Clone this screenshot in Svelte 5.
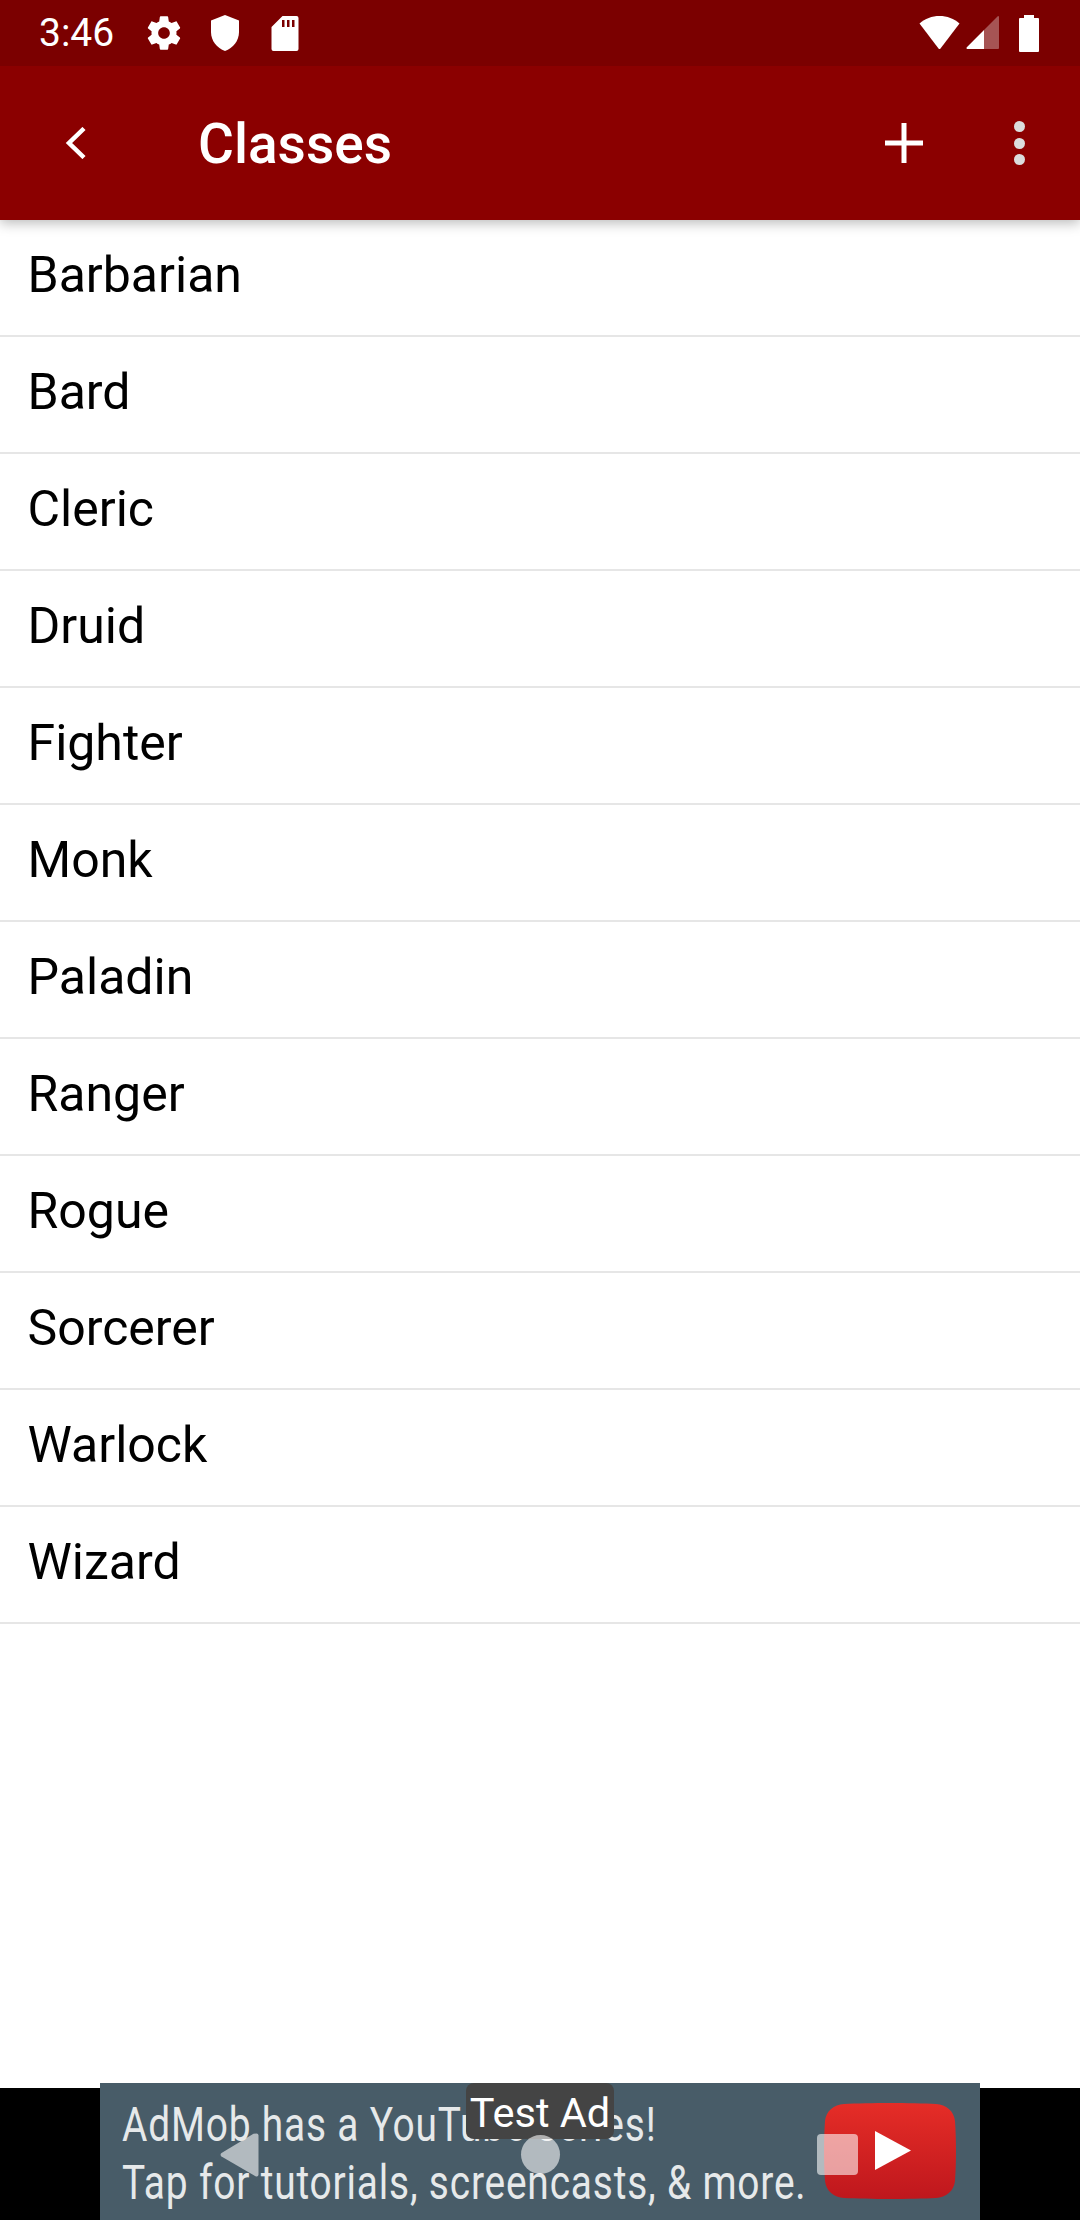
<script>
  const classes = ['Barbarian','Bard','Cleric','Druid','Fighter','Monk','Paladin','Ranger','Rogue','Sorcerer','Warlock','Wizard'];
</script>

<div class="page">
  <header class="top">
    <div class="status">
      <span class="time">3:46</span>
      <svg class="ic gear" viewBox="0 0 24 24"><path fill="#fff" d="M19.43 12.98c.04-.32.07-.64.07-.98s-.03-.66-.07-.98l2.11-1.65c.19-.15.24-.42.12-.64l-2-3.46c-.12-.22-.39-.3-.61-.22l-2.49 1c-.52-.4-1.08-.73-1.69-.98l-.38-2.65C14.46 2.18 14.25 2 14 2h-4c-.25 0-.46.18-.49.42l-.38 2.65c-.61.25-1.17.59-1.69.98l-2.49-1c-.23-.09-.49 0-.61.22l-2 3.46c-.13.22-.07.49.12.64l2.11 1.65c-.04.32-.07.65-.07.98s.03.66.07.98l-2.11 1.65c-.19.15-.24.42-.12.64l2 3.46c.12.22.39.3.61.22l2.49-1c.52.4 1.08.73 1.69.98l.38 2.65c.03.24.24.42.49.42h4c.25 0 .46-.18.49-.42l.38-2.65c.61-.25 1.17-.59 1.69-.98l2.49 1c.23.09.49 0 .61-.22l2-3.46c.12-.22.07-.49-.12-.64l-2.11-1.65zM12 15.5c-1.93 0-3.5-1.57-3.5-3.5s1.57-3.5 3.5-3.5 3.5 1.57 3.5 3.5-1.57 3.5-3.5 3.5z"/></svg>
      <svg class="ic shield" viewBox="0 0 28 36"><path fill="#fff" d="M14 0 L28 5.500 V17 C28 26 22 33 14 36 C6 33 0 26 0 17 V5.500 Z"/></svg>
      <svg class="ic sd" viewBox="0 0 27 35"><path fill="#fff" fill-rule="evenodd" d="M11 0H25a2 2 0 0 1 2 2V33a2 2 0 0 1-2 2H2a2 2 0 0 1-2-2V11ZM10.500 4v7h2.500V4ZM15.500 4v7h2.500V4ZM20.500 4v7h2.500V4Z"/></svg>
      <span class="spacer"></span>
      <svg class="ic wifi" viewBox="0 0 41 34"><path fill="#fff" d="M20.500 0C28 0 35 2.500 40.500 7.500 L21.500 32.500 a1.300 1.300 0 0 1-2 0 L.5 7.500 C6 2.500 13 0 20.500 0Z"/></svg>
      <svg class="ic signal" viewBox="0 0 33 34"><path fill="#fff" fill-opacity=".33" d="M32 0a1 1 0 0 1 1 1V32a1 1 0 0 1-1 1H18V14Z"/><path fill="#fff" d="M18 14V33H1.500a1 1 0 0 1-.7-1.700Z"/></svg>
      <svg class="ic batt" viewBox="0 0 20 37"><path fill="#fff" d="M5 0h10v3h4a1 1 0 0 1 1 1V36a1 1 0 0 1-1 1H1a1 1 0 0 1-1-1V4a1 1 0 0 1 1-1h4Z"/></svg>
    </div>
    <div class="bar">
      <svg class="back" viewBox="0 0 21 32"><path fill="none" stroke="#fff" stroke-width="4.500" d="M19 1.500 4 16 19 30.500"/></svg>
      <h1>Classes</h1>
      <span class="spacer"></span>
      <svg class="plus" viewBox="0 0 38 40"><path fill="#fff" d="M16.500 0h5v17.500H38v5H21.500V40h-5V22.500H0v-5h16.500Z"/></svg>
      <div class="dots"><i></i><i></i><i></i></div>
    </div>
  </header>

  <ul>
    {#each classes as c}
      <li>{c}</li>
    {/each}
  </ul>

  <footer>
    <div class="ad">
      <div class="adtext"><span>AdMob has a YouTube series!</span><span>Tap for tutorials, screencasts, &amp; more.</span></div>
      <svg class="yt" viewBox="0 0 132 96">
        <defs><linearGradient id="g" x1="0" y1="0" x2="0" y2="1"><stop offset="0" stop-color="#e52d27"/><stop offset="1" stop-color="#bf171d"/></linearGradient></defs>
        <path fill="url(#g)" d="M20 1C45-.3 87-.3 112 1c10 .5 18 7 19 17 1.300 19 1.300 41 0 60-1 10-9 16.500-19 17-25 1.300-67 1.300-92 0C10 94.500 2 88 1 78-.3 59-.3 37 1 18 2 8 10 1.500 20 1Z"/>
        <path fill="#fff" d="M51 28 87 47.500 51 67Z"/>
      </svg>
    </div>
    <div class="testad">Test Ad</div>
    <svg class="nav tri" viewBox="0 0 38 44"><path fill="#fff" fill-opacity=".58" d="M36 .5a2 2 0 0 1 2 2V41.500a2 2 0 0 1-3 1.700L1 23.500a2 2 0 0 1 0-3.400L33 .8Z"/></svg>
    <div class="nav circ"></div>
    <div class="nav sq"></div>
  </footer>
</div>

<style>
  :global(body) { margin: 0; background: #fff; }
  .page { width: 1080px; height: 2220px; display: flex; flex-direction: column; font-family: Roboto, sans-serif; overflow: hidden; }
  .top { position: relative; z-index: 2; box-shadow: 0 3px 12px rgba(0,0,0,.28); }
  .status { height: 66px; background: #7b0000; display: flex; align-items: center; color: #fff; padding-left: 39px; padding-right: 41px; box-sizing: border-box; }
  .time { font-size: 39px; font-weight: 400; width: 104px; }
  .ic { display: block; flex: none; }
  .gear { width: 40px; height: 40px; margin-left: 1px; }
  .shield { width: 30px; height: 36px; margin-left: 26px; }
  .sd { width: 28px; height: 35px; margin-left: 31px; }
  .spacer { flex: 1; }
  .wifi { width: 41px; height: 34px; }
  .signal { width: 33px; height: 34px; margin-left: 6px; }
  .batt { width: 20px; height: 37px; margin-left: 20px; }
  .bar { height: 154px; background: #8b0000; display: flex; align-items: center; color: #fff; box-sizing: border-box; }
  .back { width: 21px; height: 32px; margin-left: 65px; flex: none; }
  h1 { margin: 3px 0 0 112px; font-size: 55px; font-weight: 500; line-height: 1; }
  .plus { width: 40px; height: 40px; flex: none; }
  .dots { display: flex; flex-direction: column; gap: 5.500px; margin: 0 55px 0 90px; }
  .dots i { width: 11px; height: 11px; border-radius: 50%; background: #dcdcdc; display: block; }
  ul { list-style: none; margin: 0; padding: 0; flex: 1; }
  li { height: 117px; box-sizing: border-box; border-bottom: 2px solid #e6e6e6; padding: 24px 0 0 27.500px; font-size: 50px; line-height: 62px; color: #000; }
  footer { position: relative; height: 132px; background: #000; }
  .ad { position: absolute; left: 100px; top: -5px; width: 880px; height: 137px; background: #485c68; overflow: hidden; }
  .adtext { position: absolute; left: 22px; top: 13px; display: flex; flex-direction: column; color: #e6e9ea; font-size: 48px; line-height: 58px; letter-spacing: 1px; white-space: nowrap; transform: scaleX(.81); transform-origin: left top; }
  .yt { position: absolute; left: 722px; top: 20px; width: 136px; height: 96px; }
  .testad { position: absolute; left: 466px; top: -5px; width: 148px; height: 56px; background: #444; border-radius: 8px; color: #fff; font-size: 41.500px; line-height: 59px; text-align: center; }
  .nav { position: absolute; }
  .tri { left: 220px; top: 45px; width: 39px; height: 44px; }
  .circ { left: 521px; top: 47px; width: 39px; height: 39px; border-radius: 50%; background: rgba(255,255,255,.58); }
  .sq { left: 817px; top: 46px; width: 41px; height: 41px; border-radius: 4px; background: rgba(255,255,255,.58); }
</style>
